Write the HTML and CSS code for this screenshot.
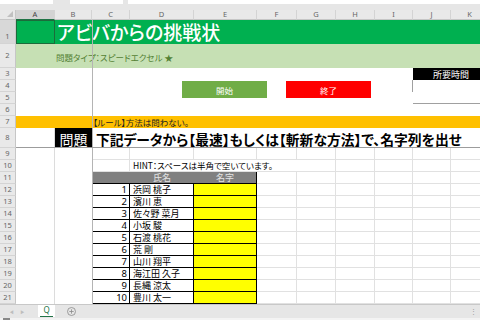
FILE: index.html
```html
<!DOCTYPE html>
<html lang="ja">
<head>
    <meta charset="UTF-8">
    <meta name="viewport" content="width=device-width, initial-scale=1.0">
    <title>アビバからの挑戦状</title>
    <link rel="stylesheet" href="styles.css">
</head>
<body>

    <div class="topbar">
        <div class="namebox"></div>
        <div class="fxbox"></div>
        <div class="formula"></div>
    </div>

    <div class="sheet-wrap">
        <div class="sheet">
            <!-- nagłówki kolumn -->
            <div class="corner"><span class="tri"></span></div>
            <div class="ch ch-sel">A</div><div class="ch">B</div><div class="ch">C</div><div class="ch">D</div><div class="ch">E</div><div class="ch">F</div><div class="ch">G</div><div class="ch">H</div><div class="ch">I</div><div class="ch">J</div><div class="ch">K</div>

            <!-- 1 -->
            <div class="rh rh-sel">1</div><div class="green sel"></div><div class="green title span10">アビバからの挑戦状</div>
            <!-- 2 -->
            <div class="rh">2</div><div class="lgreen"></div><div class="lgreen subtitle span10">問題タイプ：スピードエクセル ★</div>
            <!-- 3 -->
            <div class="rh">3</div><div class="blank"></div><div class="blank"></div><div class="blank span7"></div><div class="timehead span2">所要時間</div>
            <!-- 4 -->
            <div class="rh">4</div><div class="blank"></div><div class="blank"></div><div class="blank span7"></div><div class="timebox span2"></div>
            <!-- 5 -->
            <div class="rh">5</div><div class="blank"></div><div class="blank"></div><div class="blank span7"></div>
            <!-- 6 -->
            <div class="rh">6</div><div class="blank"></div><div class="blank"></div><div class="blank span9"></div>
            <!-- 7 -->
            <div class="rh">7</div><div class="orange"></div><div class="orange"></div><div class="orange rule span9">【ルール】方法は問わない。</div>
            <!-- 8 -->
            <div class="rh">8</div><div class="blank ca"></div><div class="mondai">問題</div><div class="blank question span9">下記データから【最速】もしくは【斬新な方法】で、名字列を出せ</div>
            <!-- 9 -->
            <div class="rh">9</div><div class="ca"></div><div class="cb"></div><div class="c"></div><div class="c"></div><div class="c"></div><div class="c"></div><div class="c"></div><div class="c"></div><div class="c"></div><div class="c"></div><div class="c"></div>
            <!-- 10 -->
            <div class="rh">10</div><div class="ca"></div><div class="cb"></div><div class="c"></div><div class="c hint span3">HINT：スペースは半角で空いています。</div><div class="c"></div><div class="c"></div><div class="c"></div><div class="c"></div><div class="c"></div>
            <!-- 11 -->
            <div class="rh">11</div><div class="ca"></div><div class="cb"></div><div class="th"></div><div class="th">氏名</div><div class="th th-last">名字</div><div class="c"></div><div class="c"></div><div class="c"></div><div class="c"></div><div class="c"></div><div class="c"></div>
            <!-- 12-21 -->
            <div class="rh">12</div><div class="ca"></div><div class="cb"></div><div class="num">1</div><div class="name">浜岡 桃子</div><div class="answer"></div><div class="c"></div><div class="c"></div><div class="c"></div><div class="c"></div><div class="c"></div><div class="c"></div>
            <div class="rh">13</div><div class="ca"></div><div class="cb"></div><div class="num">2</div><div class="name">濱川 恵</div><div class="answer"></div><div class="c"></div><div class="c"></div><div class="c"></div><div class="c"></div><div class="c"></div><div class="c"></div>
            <div class="rh">14</div><div class="ca"></div><div class="cb"></div><div class="num">3</div><div class="name">佐々野 菜月</div><div class="answer"></div><div class="c"></div><div class="c"></div><div class="c"></div><div class="c"></div><div class="c"></div><div class="c"></div>
            <div class="rh">15</div><div class="ca"></div><div class="cb"></div><div class="num">4</div><div class="name">小坂 駿</div><div class="answer"></div><div class="c"></div><div class="c"></div><div class="c"></div><div class="c"></div><div class="c"></div><div class="c"></div>
            <div class="rh">16</div><div class="ca"></div><div class="cb"></div><div class="num">5</div><div class="name">石渡 桃花</div><div class="answer"></div><div class="c"></div><div class="c"></div><div class="c"></div><div class="c"></div><div class="c"></div><div class="c"></div>
            <div class="rh">17</div><div class="ca"></div><div class="cb"></div><div class="num">6</div><div class="name">荒 剛</div><div class="answer"></div><div class="c"></div><div class="c"></div><div class="c"></div><div class="c"></div><div class="c"></div><div class="c"></div>
            <div class="rh">18</div><div class="ca"></div><div class="cb"></div><div class="num">7</div><div class="name">山川 翔平</div><div class="answer"></div><div class="c"></div><div class="c"></div><div class="c"></div><div class="c"></div><div class="c"></div><div class="c"></div>
            <div class="rh">19</div><div class="ca"></div><div class="cb"></div><div class="num">8</div><div class="name">海江田 久子</div><div class="answer"></div><div class="c"></div><div class="c"></div><div class="c"></div><div class="c"></div><div class="c"></div><div class="c"></div>
            <div class="rh">20</div><div class="ca"></div><div class="cb"></div><div class="num">9</div><div class="name">長縄 涼太</div><div class="answer"></div><div class="c"></div><div class="c"></div><div class="c"></div><div class="c"></div><div class="c"></div><div class="c"></div>
            <div class="rh">21</div><div class="ca"></div><div class="cb"></div><div class="num">10</div><div class="name">豊川 太一</div><div class="answer"></div><div class="c"></div><div class="c"></div><div class="c"></div><div class="c"></div><div class="c"></div><div class="c"></div>
        </div>

        <!-- kształty i linie blokady okienek leżą nad arkuszem -->
        <div class="btn btn-start">開始</div>
        <div class="btn btn-end">終了</div>
        <div class="freeze-v"></div>
        <div class="freeze-h"></div>
    </div>

    <div class="tabs">
        <span class="nav">◀</span>
        <span class="nav">▶</span>
        <div class="tab"><span>Q</span></div>
        <svg class="add" width="9" height="9" viewBox="0 0 9 9">
            <circle cx="4.5" cy="4.5" r="4" fill="none" stroke="#8a8a8a" stroke-width="0.8"/>
            <path d="M4.5 2.3 V6.7 M2.3 4.5 H6.7" stroke="#8a8a8a" stroke-width="0.8"/>
        </svg>
        <span class="more">⋮</span>
    </div>
    <div class="status"><span class="status-icon"></span></div>

</body>
</html>
```

FILE: styles.css
```css
* {
    box-sizing: border-box;
}
body {
    margin: 0;
    width: 480px;
    height: 320px;
    overflow: hidden;
    background-color: #fff;
    font-family: "Noto Sans CJK JP", "Noto Sans", sans-serif;
    font-feature-settings: "palt";
    color: #000;
}
.topbar {
    height: 10px;
    background-color: #e6e6e6;
    display: flex;
    align-items: flex-start;
}
.namebox,
.fxbox,
.formula {
    height: 4px;
    background-color: #fff;
}
.namebox {
    width: 53px;
}
.fxbox {
    width: 53px;
    margin-left: 17px;
}
.formula {
    flex: 1;
    margin-left: 5px;
}
.sheet-wrap {
    position: relative;
    height: 294px;
    overflow: hidden;
}
.sheet {
    display: grid;
    grid-template-columns: 16px 39px 37px 38px 64px 63px 40px 39px 39px 38px 38px 38px;
    grid-template-rows: 10px 24px 24px repeat(5, 12px) 20px repeat(13, 12px);
    width: 489px;
}
.sheet > div {
    display: flex;
    align-items: center;
    line-height: 1;
    white-space: nowrap;
    overflow: hidden;
}
.span2 { grid-column: span 2; }
.span3 { grid-column: span 3; }
.span7 { grid-column: span 7; }
.span9 { grid-column: span 9; }
.span10 { grid-column: span 10; }

/* nagłówki */
.corner {
    background-color: #e9e9e9;
    border-right: 1px solid #c6c6c6;
    border-bottom: 1px solid #c6c6c6;
    position: relative;
}
.tri {
    position: absolute;
    right: 2px;
    bottom: 2px;
    width: 0;
    height: 0;
    border-left: 6px solid transparent;
    border-bottom: 6px solid #c0c0c0;
}
.ch {
    background-color: #e9e9e9;
    border-right: 1px solid #d4d4d4;
    border-bottom: 1px solid #c6c6c6;
    justify-content: center;
    font-family: "Noto Sans", sans-serif;
    font-size: 7.5px;
    color: #666;
}
.ch-sel {
    background-color: #d3d3d3;
    border-bottom: 1px solid #217346;
    color: #444;
}
.rh {
    background-color: #e9e9e9;
    border-right: 1px solid #c6c6c6;
    border-bottom: 1px solid #d4d4d4;
    justify-content: center;
    font-family: "Noto Sans", sans-serif;
    font-size: 7.5px;
    color: #666;
}
.rh-sel {
    background-color: #d8d8d8;
    padding-top: 10px;
}

/* komórki */
.green {
    background-color: #00b050;
}
.sel {
    box-shadow: inset 0 0 0 1px #1c6b3b;
}
.sheet > .title {
    padding-left: 2px;
    font-size: 19px;
    line-height: 24px;
    font-weight: 500;
    color: #fff;
    overflow: visible;
}
.lgreen {
    background-color: #c6e0b4;
}
.subtitle {
    padding-left: 1px;
    padding-top: 2px;
    font-size: 8.5px;
    color: #548235;
}
.blank {
    background-color: #fff;
}
.timehead {
    background-color: #000;
    color: #fff;
    font-size: 9px;
    justify-content: center;
}
.timebox {
    grid-row: span 2;
    background-color: #fff;
    border: 1px solid #a0a0a0;
    border-top: none;
    margin-left: -1px;
}
.orange {
    background-color: #ffc000;
}
.rule {
    padding-left: 1px;
    font-size: 8.5px;
    color: #222;
}
.ca {
    border-right: 1px solid #dcdcdc;
}
.mondai {
    background-color: #000;
    color: #fff;
    font-size: 14px;
    justify-content: center;
    padding-top: 1px;
}
.question {
    padding-left: 4px;
    padding-top: 3px;
    font-size: 13.8px;
    font-weight: 700;
}
.c {
    border-right: 1px solid #e1e1e1;
    border-bottom: 1px solid #e1e1e1;
}
.hint {
    padding-left: 3px;
    font-size: 8.5px;
    border-right: none;
}
.th {
    background-color: #808080;
    color: #e4e4e4;
    font-size: 9px;
    justify-content: center;
    border-bottom: 1px solid #000;
}
.th-last {
    border-right: 1px solid #000;
}
.num,
.name,
.answer {
    border-right: 1px solid #000;
    border-bottom: 1px solid #000;
    font-size: 9px;
}
.num {
    justify-content: flex-end;
    padding-right: 2px;
    font-family: "Noto Sans", sans-serif;
    font-size: 9.5px;
}
.name {
    padding-left: 3px;
}
.answer {
    background-color: #ffff00;
}

/* kształty nad arkuszem */
.btn {
    position: absolute;
    top: 71px;
    width: 85px;
    height: 17px;
    display: flex;
    align-items: center;
    justify-content: center;
    color: #fff;
    font-size: 8.5px;
}
.btn-start {
    left: 182px;
    background-color: #70ad47;
}
.btn-end {
    left: 286px;
    background-color: #ff0000;
}
.freeze-v {
    position: absolute;
    left: 92px;
    top: 10px;
    width: 1px;
    height: 284px;
    background-color: #b4b4b4;
}
.freeze-h {
    position: absolute;
    left: 16px;
    top: 137px;
    width: 464px;
    height: 1px;
    background-color: #9c9c9c;
}

/* karty arkuszy */
.tabs {
    height: 14px;
    background-color: #e6e6e6;
    border-top: 1px solid #c8c8c8;
    display: flex;
    align-items: flex-start;
    font-family: "Noto Sans", sans-serif;
}
.nav {
    font-size: 5px;
    color: #bdbdbd;
    margin-top: 4px;
    margin-left: 9px;
}
.nav + .nav {
    margin-left: 6px;
}
.tab {
    width: 17px;
    height: 12px;
    margin-left: 13px;
    background-color: #fff;
    display: flex;
    justify-content: center;
}
.tab span {
    font-size: 8px;
    line-height: 9px;
    color: #217346;
    padding: 0 3px;
    border-bottom: 1px solid #217346;
}
.add {
    margin-left: 12px;
    margin-top: 2px;
}
.more {
    margin-left: auto;
    margin-right: 3px;
    font-size: 7px;
    color: #999;
    margin-top: 2px;
}
.status {
    height: 2px;
    background-color: #f3f3f3;
}
.status-icon {
    display: block;
    width: 7px;
    height: 2px;
    margin-left: 3px;
    background-color: #888;
}
```
